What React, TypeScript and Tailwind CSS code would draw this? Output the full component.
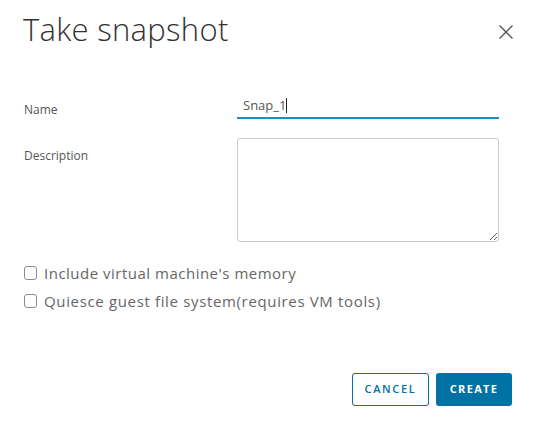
import React from "react";

export default function App() {
  return (
    <div
      className="w-[535px] h-[429px] bg-white relative overflow-hidden"
      style={{ fontFamily: "'Open Sans', Lato, sans-serif" }}
    >
      <div className="flex items-start justify-between pl-[23px] pr-[21px] pt-[9px]">
        <h1 className="text-[31px] leading-[40px] font-light text-[#313131] tracking-[0.3px]">
          Take snapshot
        </h1>
        <button className="mt-[15px] w-[16px] h-[16px] flex items-center justify-center text-[#555]">
          <svg width="16" height="16" viewBox="0 0 16 16" fill="none" stroke="currentColor" strokeWidth="1.4">
            <path d="M1.5 1.5 L14.5 14.5 M14.5 1.5 L1.5 14.5" />
          </svg>
        </button>
      </div>

      <div className="pl-[24px] pr-[36px] mt-[45px]">
        <div className="flex items-end">
          <label className="w-[213px] text-[12px] text-[#565656] pb-[0px]">Name</label>
          <div className="flex-1 h-[25px] border-b-2 border-[#1b8fbf] flex items-center pl-[6px] text-[13px] text-[#565656]">
            Snap_<span>1</span>
            <span className="inline-block w-[1px] h-[15px] bg-[#222] ml-[0px]"></span>
          </div>
        </div>
        <div className="flex mt-[19px]">
          <label className="w-[213px] text-[12px] text-[#565656] pt-[9px]">Description</label>
          <textarea className="flex-1 h-[104px] border border-[#cccccc] rounded-[3px] resize-y outline-none" />
        </div>
      </div>

      <div className="pl-[24px] mt-[24px] flex flex-col gap-[14px]">
        <label className="flex items-center gap-[7px] text-[15px] text-[#666666] leading-[14px] tracking-[0.5px]">
          <span className="w-[13px] h-[14px] border border-[#8c8c8c] rounded-[3px] bg-white"></span>
          Include virtual machine's memory
        </label>
        <label className="flex items-center gap-[7px] text-[15px] text-[#666666] leading-[14px] tracking-[0.65px]">
          <span className="w-[13px] h-[14px] border border-[#8c8c8c] rounded-[3px] bg-white"></span>
          Quiesce guest file system(requires VM tools)
        </label>
      </div>

      <div className="flex justify-end gap-[7px] pr-[23px] mt-[65px]">
        <button className="w-[77px] h-[33px] border border-[#0072a3] rounded-[3px] text-[#0072a3] text-[11px] font-semibold tracking-[0.15em] bg-white">
          CANCEL
        </button>
        <button className="w-[76px] h-[33px] bg-[#0072a3] rounded-[3px] text-white text-[11px] font-bold tracking-[0.12em]">
          CREATE
        </button>
      </div>
    </div>
  );
}
